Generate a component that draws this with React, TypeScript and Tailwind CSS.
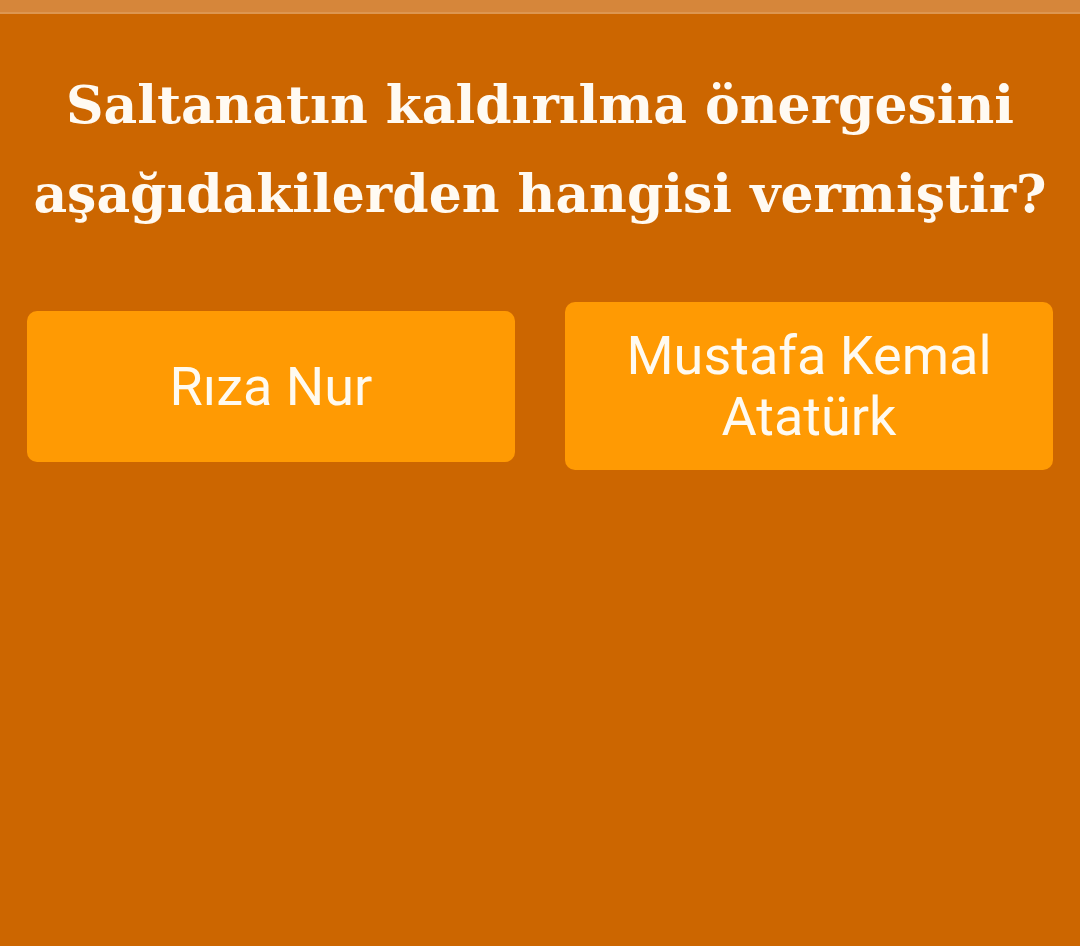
export default function App() {
  const answers = ["Rıza Nur", "Mustafa Kemal Atatürk"];

  return (
    <div className="min-h-[946px] w-full bg-[#cc6600] flex flex-col">
      <div className="h-[12px] bg-[#d6863a]" />
      <div className="h-[2px] bg-[#dd9650]" />

      <h1
        className="mt-[46px] px-[20px] text-center text-[52px] leading-[89px] font-bold text-[#fffaf2]"
        style={{ fontFamily: '"DejaVu Serif", serif' }}
      >
        Saltanatın kaldırılma önergesini
        <br />
        aşağıdakilerden hangisi vermiştir?
      </h1>

      <div className="mt-[64px] grid grid-cols-2 items-center gap-[50px] px-[27px]">
        {answers.map((a) => (
          <button
            key={a}
            className="min-h-[151px] rounded-[10px] bg-[#ff9a03] px-[40px] py-[23px] flex items-center justify-center text-center text-[54px] leading-[61px] text-[#fffaf0]"
            style={{ fontFamily: "Roboto, sans-serif" }}
          >
            {a}
          </button>
        ))}
      </div>
    </div>
  );
}
